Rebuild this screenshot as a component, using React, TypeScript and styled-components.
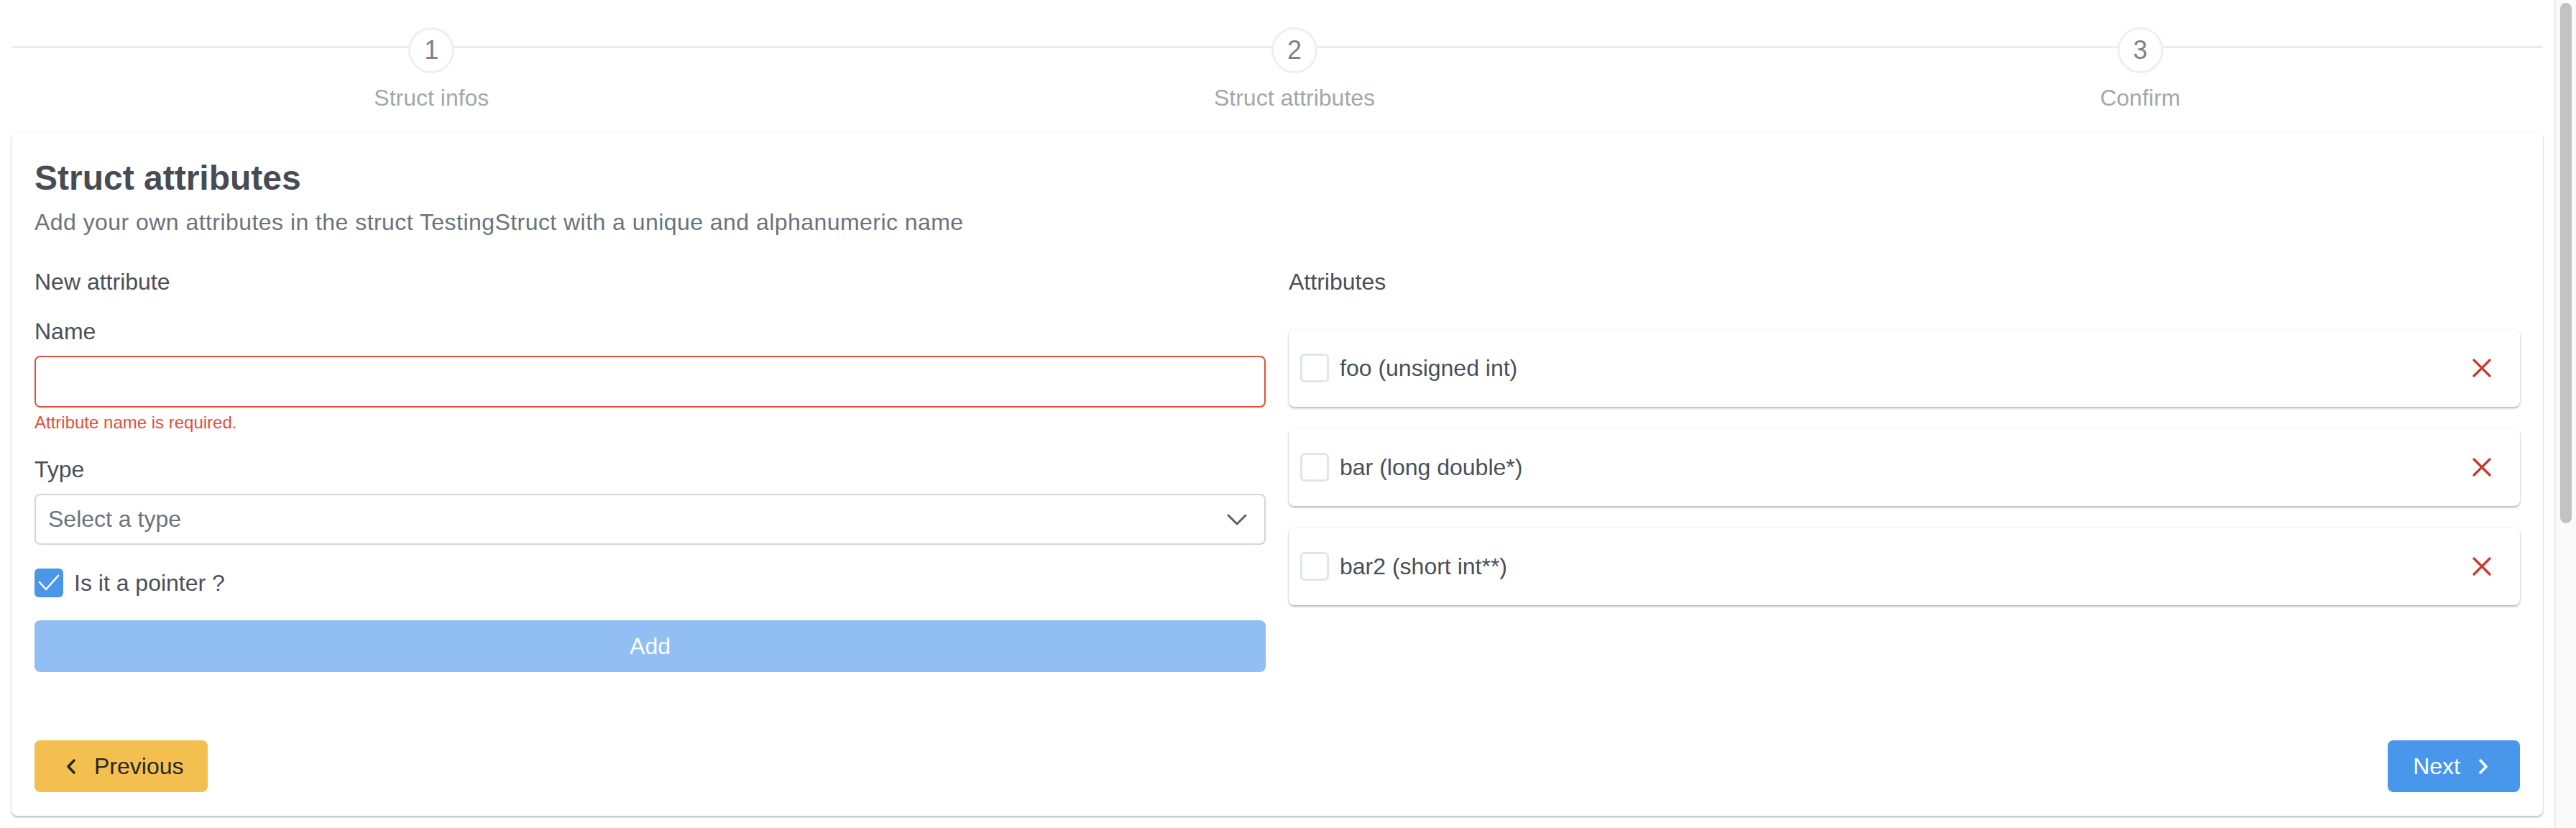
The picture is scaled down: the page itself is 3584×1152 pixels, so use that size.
import React from "react";
import styled, { createGlobalStyle } from "styled-components";

const GlobalStyle = createGlobalStyle`
  html, body { margin: 0; padding: 0; height: 100%; overflow: hidden; background: #fff; }
  #root { height: 100%; }
  *, *::before, *::after { box-sizing: border-box; }
`;

const Shell = styled.div`
  display: flex;
  height: 100vh;
  overflow: hidden;
  font-family: "Liberation Sans", Arial, sans-serif;
  color: #495057;
`;

const Main = styled.main`
  flex: 1;
  min-width: 0;
  padding: 0 16px;
  overflow: hidden;
`;

const ScrollTrack = styled.div`
  flex: none;
  width: 30px;
  height: 100%;
  background: #fafafa;
  border-left: 2px solid #ececec;
  padding: 4px 6px 0 6px;
`;

const ScrollThumb = styled.div`
  height: 724px;
  border-radius: 8px;
  background: #c2c2c2;
`;

const Steps = styled.nav`
  display: flex;
  padding-top: 38px;
  background: linear-gradient(#ececec, #ececec) no-repeat 0 64px / 100% 3px;
`;

const StepItem = styled.div`
  flex: 1 1 auto;
  display: flex;
  flex-direction: column;
  align-items: center;
`;

const StepMarker = styled.div`
  width: 64px;
  height: 64px;
  border-radius: 50%;
  border: 3px solid #efefef;
  background: #fff;
  display: flex;
  align-items: center;
  justify-content: center;
  font-size: 36px;
  color: #7c8188;
`;

const StepLabel = styled.div`
  margin-top: 10px;
  font-size: 32px;
  line-height: 48px;
  color: #a3a7ac;
`;

const Card = styled.section`
  margin-top: 25px;
  background: #fff;
  border-radius: 8px;
  box-shadow: 0 2px 3px rgba(10, 10, 10, 0.28), 0 0 0 1px rgba(10, 10, 10, 0.03);
  padding: 36px 32px 33px;
`;

const Title = styled.h2`
  margin: 0;
  font-size: 48px;
  line-height: 54px;
  font-weight: 700;
  color: #484c52;
`;

const Subtitle = styled.p`
  margin: 10px 0 0;
  font-size: 32px;
  line-height: 48px;
  letter-spacing: 0.45px;
  color: #6c737b;
`;

const Columns = styled.div`
  display: grid;
  grid-template-columns: 1fr 1fr;
  column-gap: 32px;
  margin-top: 35px;
`;

const Column = styled.div`
  display: flex;
  flex-direction: column;
`;

const SectionLabel = styled.div`
  font-size: 32px;
  line-height: 48px;
  color: #495057;
`;

const FieldLabel = styled.label<{ $gap: number }>`
  margin-top: ${(p) => p.$gap}px;
  font-size: 32px;
  line-height: 48px;
  color: #495057;
`;

const TextInput = styled.input`
  margin-top: 10px;
  height: 72px;
  width: 100%;
  border: 2px solid #e0503c;
  border-radius: 8px;
  padding: 0 18px;
  font: inherit;
  font-size: 32px;
  outline: none;
  background: #fff;
`;

const Help = styled.div`
  margin-top: 3px;
  font-size: 24px;
  line-height: 36px;
  color: #e0503c;
`;

const SelectBox = styled.div`
  margin-top: 10px;
  height: 71px;
  border: 2px solid #d2d6db;
  border-radius: 8px;
  padding: 0 24px 0 17px;
  display: flex;
  align-items: center;
  justify-content: space-between;
  font-size: 32px;
  color: #6c737b;
`;

const CheckRow = styled.label`
  margin-top: 29px;
  display: flex;
  align-items: center;
  gap: 15px;
  font-size: 32px;
  line-height: 48px;
  color: #495057;
`;

const Box = styled.span<{ $checked?: boolean }>`
  flex: none;
  width: 40px;
  height: 40px;
  border-radius: 6px;
  display: inline-flex;
  align-items: center;
  justify-content: center;
  background: ${(p) => (p.$checked ? "#4a97e9" : "#fff")};
  border: ${(p) => (p.$checked ? "none" : "3px solid #e1e4e8")};
`;

const AddButton = styled.button`
  margin-top: 28px;
  height: 72px;
  width: 100%;
  border: none;
  border-radius: 8px;
  background: #91bff3;
  color: #fff;
  font: inherit;
  font-size: 32px;
`;

const AttrList = styled.div`
  margin-top: 42px;
  display: flex;
  flex-direction: column;
  gap: 30px;
`;

const AttrCard = styled.div`
  height: 108px;
  display: flex;
  align-items: center;
  gap: 15px;
  padding: 0 40px 0 16px;
  background: #fff;
  border-radius: 8px;
  box-shadow: 0 2px 3px rgba(10, 10, 10, 0.28), 0 0 0 1px rgba(10, 10, 10, 0.03);
  font-size: 32px;
  color: #495057;
`;

const AttrName = styled.span`
  flex: 1;
`;

const Footer = styled.div`
  margin-top: 95px;
  display: flex;
  justify-content: space-between;
`;

const NavButton = styled.button<{ $variant: "prev" | "next" }>`
  height: 72px;
  border: none;
  border-radius: 8px;
  display: inline-flex;
  align-items: center;
  gap: 26px;
  font: inherit;
  font-size: 32px;
  padding: ${(p) => (p.$variant === "prev" ? "0 33px 0 44px" : "0 44px 0 35px")};
  background: ${(p) => (p.$variant === "prev" ? "#f3c04f" : "#4997ea")};
  color: ${(p) => (p.$variant === "prev" ? "#262626" : "#fff")};
`;

const NextCard = styled.section`
  margin-top: 17px;
  height: 680px;
  background: #fff;
  border-top: 3px solid #e5e8eb;
  border-radius: 8px;
  box-shadow: 0 0 0 1px rgba(10, 10, 10, 0.03);
`;

const Chevron = ({ dir, color }: { dir: "left" | "right" | "down"; color: string }) => {
  if (dir === "down") {
    return (
      <svg width="28" height="16" viewBox="0 0 28 16">
        <path d="M2 2 L14 14 L26 2" fill="none" stroke={color} strokeWidth="3" strokeLinecap="round" strokeLinejoin="round" />
      </svg>
    );
  }
  return (
    <svg width="13" height="21" viewBox="0 0 13 21">
      <path
        d={dir === "left" ? "M11 2 L3 10.5 L11 19" : "M2 2 L10 10.5 L2 19"}
        fill="none"
        stroke={color}
        strokeWidth="3.5"
        strokeLinecap="round"
        strokeLinejoin="round"
      />
    </svg>
  );
};

const CloseIcon = () => (
  <svg width="26" height="26" viewBox="0 0 26 26">
    <path d="M2 2 L24 24 M24 2 L2 24" fill="none" stroke="#c9372c" strokeWidth="3.2" strokeLinecap="round" />
  </svg>
);

const CheckMark = () => (
  <svg width="40" height="40" viewBox="0 0 40 40">
    <path d="M7 19 L16 29 L33 10" fill="none" stroke="#fff" strokeWidth="2.6" strokeLinecap="round" strokeLinejoin="round" />
  </svg>
);

const steps = ["Struct infos", "Struct attributes", "Confirm"];
const attributes = ["foo (unsigned int)", "bar (long double*)", "bar2 (short int**)"];

export default function App() {
  return (
    <>
      <GlobalStyle />
      <Shell>
        <Main>
          <Steps>
            {steps.map((s, i) => (
              <StepItem key={s}>
                <StepMarker>{i + 1}</StepMarker>
                <StepLabel>{s}</StepLabel>
              </StepItem>
            ))}
          </Steps>
          <Card>
            <Title>Struct attributes</Title>
            <Subtitle>Add your own attributes in the struct TestingStruct with a unique and alphanumeric name</Subtitle>
            <Columns>
              <Column>
                <SectionLabel>New attribute</SectionLabel>
                <FieldLabel $gap={21}>Name</FieldLabel>
                <TextInput />
                <Help>Attribute name is required.</Help>
                <FieldLabel $gap={23}>Type</FieldLabel>
                <SelectBox>
                  <span>Select a type</span>
                  <Chevron dir="down" color="#5b6068" />
                </SelectBox>
                <CheckRow>
                  <Box $checked>
                    <CheckMark />
                  </Box>
                  Is it a pointer ?
                </CheckRow>
                <AddButton>Add</AddButton>
              </Column>
              <Column>
                <SectionLabel>Attributes</SectionLabel>
                <AttrList>
                  {attributes.map((a) => (
                    <AttrCard key={a}>
                      <Box />
                      <AttrName>{a}</AttrName>
                      <CloseIcon />
                    </AttrCard>
                  ))}
                </AttrList>
              </Column>
            </Columns>
            <Footer>
              <NavButton $variant="prev">
                <Chevron dir="left" color="#262626" />
                Previous
              </NavButton>
              <NavButton $variant="next">
                Next
                <Chevron dir="right" color="#fff" />
              </NavButton>
            </Footer>
          </Card>
          <NextCard />
        </Main>
        <ScrollTrack>
          <ScrollThumb />
        </ScrollTrack>
      </Shell>
    </>
  );
}
